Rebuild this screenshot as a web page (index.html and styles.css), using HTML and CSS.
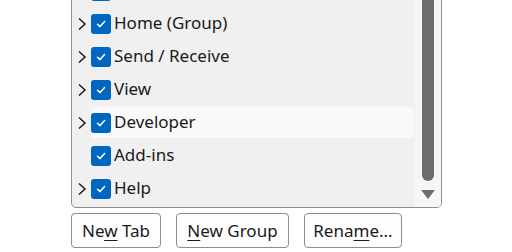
FILE: index.html
```html
<!DOCTYPE html>
<html lang="en">
<head>
  <meta charset="UTF-8">
  <title>Customize Ribbon</title>
  <link rel="stylesheet" href="styles.css">
</head>
<body>
  <div class="panel">
    <div class="listbox">
      <ul class="rows">
        <li class="row"><span class="expander"></span><span class="check"><svg viewBox="0 0 12 12"><path d="M2.5 6.3 L5 8.6 L9.6 3.6"/></svg></span></li>
        <li class="row"><span class="expander"><svg viewBox="0 0 10 14"><path d="M2 1.5 L8 7 L2 12.5"/></svg></span><span class="check"><svg viewBox="0 0 12 12"><path d="M2.5 6.3 L5 8.6 L9.6 3.6"/></svg></span><span class="label">Home (Group)</span></li>
        <li class="row"><span class="expander"><svg viewBox="0 0 10 14"><path d="M2 1.5 L8 7 L2 12.5"/></svg></span><span class="check"><svg viewBox="0 0 12 12"><path d="M2.5 6.3 L5 8.6 L9.6 3.6"/></svg></span><span class="label">Send / Receive</span></li>
        <li class="row"><span class="expander"><svg viewBox="0 0 10 14"><path d="M2 1.5 L8 7 L2 12.5"/></svg></span><span class="check"><svg viewBox="0 0 12 12"><path d="M2.5 6.3 L5 8.6 L9.6 3.6"/></svg></span><span class="label">View</span></li>
        <li class="row hover"><span class="expander"><svg viewBox="0 0 10 14"><path d="M2 1.5 L8 7 L2 12.5"/></svg></span><span class="check"><svg viewBox="0 0 12 12"><path d="M2.5 6.3 L5 8.6 L9.6 3.6"/></svg></span><span class="label">Developer</span></li>
        <li class="row"><span class="expander"></span><span class="check"><svg viewBox="0 0 12 12"><path d="M2.5 6.3 L5 8.6 L9.6 3.6"/></svg></span><span class="label">Add-ins</span></li>
        <li class="row"><span class="expander"><svg viewBox="0 0 10 14"><path d="M2 1.5 L8 7 L2 12.5"/></svg></span><span class="check"><svg viewBox="0 0 12 12"><path d="M2.5 6.3 L5 8.6 L9.6 3.6"/></svg></span><span class="label">Help</span></li>
      </ul>
      <div class="scrollbar">
        <div class="thumb"></div>
        <div class="arrow"></div>
      </div>
    </div>
    <div class="buttons">
      <button type="button" class="btn-tab">Ne<u>w</u> Tab</button>
      <button type="button" class="btn-group"><u>N</u>ew Group</button>
      <button type="button" class="btn-rename">Rena<u>m</u>e...</button>
    </div>
  </div>
</body>
</html>
```

FILE: styles.css
```css
body {
  margin: 0;
  background: #ffffff;
  font-family: "Noto Sans", "Open Sans", sans-serif;
  color: #1a1a1a;
  overflow: hidden;
}
.panel {
  padding-left: 71px;
  width: 371px;
}
.listbox {
  display: flex;
  height: 233px;
  margin-top: -27px;
  border: 1px solid #8d8d8d;
  border-radius: 0 0 5px 5px;
  background: #f0f0f0;
  overflow: hidden;
}
.rows {
  flex: 1;
  list-style: none;
  margin: 0;
  padding: 0;
}
.row {
  display: flex;
  align-items: center;
  height: 33px;
  font-size: 17px;
  position: relative;
}
.row.hover::before {
  content: "";
  position: absolute;
  left: 19px;
  right: 1px;
  top: 1px;
  bottom: 1px;
  background: #f9f9f9;
  border-radius: 4px;
}
.expander {
  width: 19px;
  height: 14px;
  display: flex;
  justify-content: center;
  position: relative;
}
.expander svg {
  width: 10px;
  height: 14px;
  fill: none;
  stroke: #1a1a1a;
  stroke-width: 1.5;
}
.check {
  width: 20px;
  height: 20px;
  margin-top: 1px;
  border-radius: 3px;
  background: #0067c0;
  display: flex;
  align-items: center;
  justify-content: center;
  position: relative;
}
.check svg {
  width: 12px;
  height: 12px;
  fill: none;
  stroke: #ffffff;
  stroke-width: 1.5;
  stroke-linecap: round;
  stroke-linejoin: round;
}
.label {
  margin-left: 3px;
  position: relative;
  top: -1px;
}
.scrollbar {
  width: 26px;
  background: #f6f6f6;
  display: flex;
  flex-direction: column;
  align-items: center;
  padding-bottom: 8px;
}
.thumb {
  flex: 1;
  width: 12px;
  background: #6c6c6c;
  border-radius: 0 0 6px 6px;
}
.arrow {
  margin-top: 9px;
  width: 0;
  height: 0;
  border-left: 7px solid transparent;
  border-right: 7px solid transparent;
  border-top: 9px solid #6c6c6c;
}
.buttons {
  display: flex;
  gap: 15px;
  margin-top: 5px;
}
button {
  font-family: inherit;
  font-size: 17px;
  color: #1a1a1a;
  background: #fdfdfd;
  border: 1px solid #8d8d8d;
  border-radius: 4px;
  height: 35px;
  padding: 0;
  white-space: nowrap;
}
.btn-tab {
  width: 90px;
}
.btn-group {
  width: 113px;
}
.btn-rename {
  width: 98px;
}
u {
  text-underline-offset: 3px;
}
```
